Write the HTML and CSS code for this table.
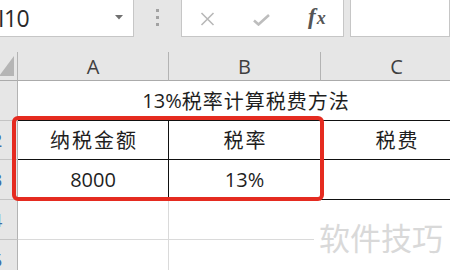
FILE: index.html
```html
<!DOCTYPE html>
<html lang="zh-CN">
<head>
<meta charset="utf-8">
<title>13%税率计算税费方法</title>
<link rel="stylesheet" href="styles.css">
</head>
<body>
<div class="app">
  <div class="toolbar">
    <div class="namebox">
      <span class="ref">I10</span>
      <svg class="caret" width="8" height="5" viewBox="0 0 8 5"><path d="M0 0H8L4 4.5Z" fill="#707070"/></svg>
    </div>
    <div class="grip"><i></i><i></i><i></i></div>
    <div class="fbtns">
      <svg class="btn-x" width="15" height="14" viewBox="0 0 15 14"><path d="M1.5 1L13.5 13M13.5 1L1.5 13" stroke="#b8b8b8" stroke-width="1.6" fill="none"/></svg>
      <svg class="btn-ok" width="17" height="12" viewBox="0 0 17 12"><path d="M1 6.5L5.5 10.5L16 1" stroke="#bdbdbd" stroke-width="2.6" fill="none"/></svg>
      <span class="fx"><i class="f">f</i><i class="x">x</i></span>
    </div>
    <div class="finput"></div>
  </div>
  <div class="strip"></div>
  <div class="sheet">
    <div class="ch corner"><svg width="15" height="20" viewBox="0 0 15 20"><path d="M0 20H15V0Z" fill="#b5b5b5"/></svg></div>
    <div class="ch">A</div>
    <div class="ch">B</div>
    <div class="ch">C</div>

    <div class="rh">1</div>
    <div class="cell title"><span class="num">13%</span><span class="cjk wide">税率计算税费方法</span></div>

    <div class="rh">2</div>
    <div class="cell boxed"><span class="cjk">纳税金额</span></div>
    <div class="cell boxed"><span class="cjk">税率</span></div>
    <div class="cell boxed"><span class="cjk">税费</span></div>

    <div class="rh">3</div>
    <div class="cell boxed"><span class="num">8000</span></div>
    <div class="cell boxed"><span class="num">13%</span></div>
    <div class="cell boxed"></div>

    <div class="rh">4</div>
    <div class="cell"></div>
    <div class="cell"></div>
    <div class="cell"></div>

    <div class="rh">5</div>
    <div class="cell"></div>
    <div class="cell"></div>
    <div class="cell"></div>
  </div>
</div>
<div class="callout"></div>
<div class="watermark">软件技巧</div>
</body>
</html>
```

FILE: styles.css
```css
* { box-sizing: border-box; }

html, body {
  margin: 0;
  padding: 0;
  width: 450px;
  height: 270px;
  overflow: hidden;
  background: #fff;
  font-family: "Open Sans", "Noto Sans CJK SC", sans-serif;
  color: #1e1e1e;
}

/* workbook window, scrolled a little past its left edge */
.app {
  margin-left: -23px;
  width: 473px;
}

/* name box + formula bar */
.toolbar {
  display: flex;
  height: 37px;
  background: #e6e6e6;
}

.namebox {
  width: 157px;
  height: 37px;
  background: #fff;
  border-right: 1px solid #c6c6c6;
  border-bottom: 1px solid #c6c6c6;
  display: flex;
  align-items: center;
  padding-left: 21px;
  padding-right: 10px;
}

.ref {
  font-size: 23px;
  color: #2a2a2a;
  line-height: 1;
  letter-spacing: -0.5px;
}

.caret { margin-left: auto; margin-top: -2px; }

.grip {
  width: 47px;
  display: flex;
  flex-direction: column;
  align-items: center;
  justify-content: center;
  gap: 4px;
  padding-bottom: 2px;
}
.grip i {
  display: block;
  width: 3px;
  height: 3px;
  background: #a2a2a2;
}

.fbtns {
  width: 163px;
  height: 37px;
  background: #fff;
  border: 1px solid #c6c6c6;
  border-top: 0;
  display: flex;
  align-items: center;
  padding-left: 18px;
}
.btn-x { margin-top: 1px; }
.btn-ok { margin-left: 38px; margin-top: 4px; }

.fx {
  margin-left: 38px;
  font-family: "Liberation Serif", "DejaVu Serif", serif;
  font-weight: bold;
  color: #555;
  display: flex;
  align-items: baseline;
  margin-top: -3px;
}
.fx .f { font-size: 23px; }
.fx .x { font-size: 18px; margin-left: 1px; }

.finput {
  flex: 1;
  height: 37px;
  margin-left: 6px;
  background: #fff;
  border: 1px solid #c6c6c6;
  border-top: 0;
}

.strip {
  height: 15px;
  background: #e6e6e6;
}

/* the worksheet grid */
.sheet {
  display: grid;
  grid-template-columns: 41px 151px 152px 152px;
  grid-template-rows: 29px 40px 39px 40px 40px 40px;
}

.ch {
  background: #e6e6e6;
  border-right: 1px solid #b3b3b3;
  border-bottom: 1px solid #ababab;
  display: flex;
  align-items: center;
  justify-content: center;
  font-size: 20px;
  color: #3f3f3f;
  line-height: 1;
  padding-top: 1px;
}

.corner {
  justify-content: flex-end;
  align-items: flex-end;
  padding: 0 3px 4px 0;
}
.corner svg { display: block; }

.rh {
  background: #e6e6e6;
  border-right: 1px solid #b3b3b3;
  border-bottom: 1px solid #c4c4c4;
  display: flex;
  align-items: center;
  justify-content: center;
  font-size: 19px;
  color: #3d6fa6;
}

.cell {
  border-right: 1px solid #dadada;
  border-bottom: 1px solid #dadada;
  display: flex;
  align-items: center;
  justify-content: center;
  font-size: 20px;
  line-height: 1;
  white-space: nowrap;
}

.title {
  grid-column: span 3;
  border-right: 0;
  border-bottom-color: #111;
}

.boxed {
  border-right-color: #111;
  border-bottom-color: #111;
}

.cjk {
  font-family: "Noto Sans CJK SC", sans-serif;
  letter-spacing: 2px;
  margin-right: -2px;
}
.cjk.wide { letter-spacing: 1px; margin-right: -1px; }

.num { font-family: "Open Sans", sans-serif; }

/* red highlight drawn over the header and data rows */
.callout {
  position: absolute;
  left: 12px;
  top: 116px;
  width: 312px;
  height: 85px;
  border: 4px solid #e52b20;
  border-radius: 6px;
}

/* site stamp in the lower-right corner */
.watermark {
  position: absolute;
  left: 314px;
  top: 201px;
  right: 0;
  bottom: 0;
  background: #fff;
  display: flex;
  align-items: center;
  padding: 2px 0 0 5px;
  font-family: "Noto Sans CJK SC", sans-serif;
  font-size: 31px;
  color: #d9d9d9;
  letter-spacing: 0;
}
```
